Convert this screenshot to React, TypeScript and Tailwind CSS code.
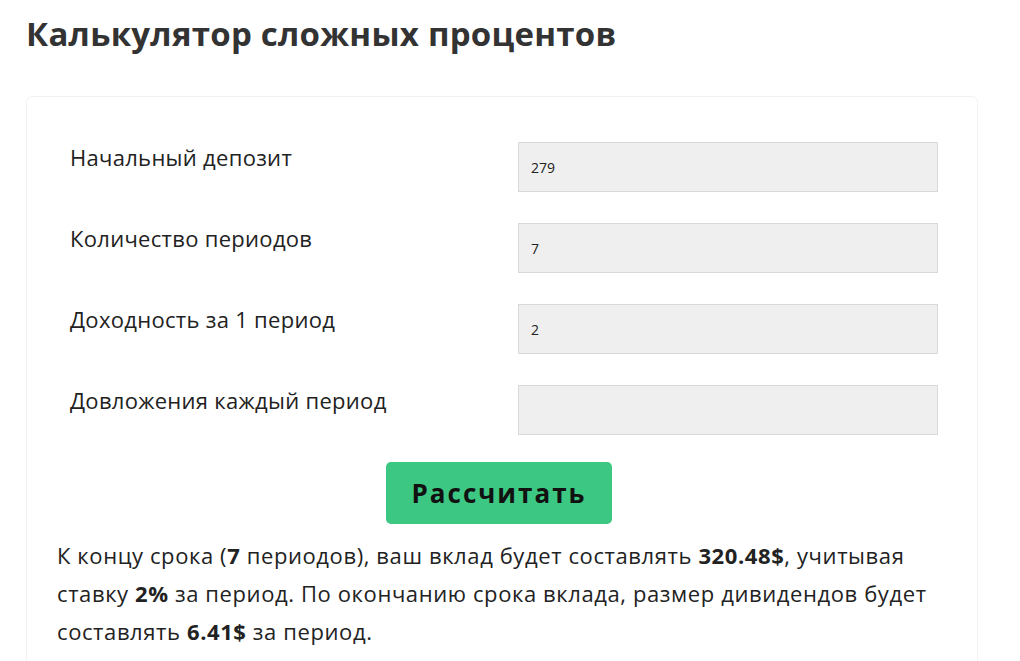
import { useState } from 'react'

const FIELDS = [
  { label: 'Начальный депозит', value: '279' },
  { label: 'Количество периодов', value: '7' },
  { label: 'Доходность за 1 период', value: '2' },
  { label: 'Довложения каждый период', value: '' },
]

export default function App() {
  const [values, setValues] = useState(FIELDS.map(f => f.value))

  return (
    <div className="min-h-screen bg-white px-[26px] pt-[12px] text-[#222]" style={{ fontFamily: '"Open Sans", "Noto Sans", sans-serif' }}>
      <h1 className="text-[33px] font-bold leading-[44px] tracking-[0.25px] text-[#333]">Калькулятор сложных процентов</h1>
      <div className="mt-[40px] w-[952px] rounded-md border border-[#f2f2f2] pt-[45px] pb-6">
        <div className="flex flex-col gap-[31px] pl-[43px] pr-[39px]">
          {FIELDS.map((f, i) => (
            <div key={f.label} className="flex items-start justify-between">
              <label className="pt-[1px] text-[22px] leading-[28px] tracking-[0.3px] text-[#222]">{f.label}</label>
              <input
                value={values[i]}
                onChange={e => setValues(v => v.map((x, j) => (j === i ? e.target.value : x)))}
                className="h-[50px] w-[420px] border border-[#d9d9d9] bg-[#efefef] px-3 text-[14px] text-[#222] outline-none"
              />
            </div>
          ))}
        </div>
        <div className="mt-[27px] flex justify-center pr-[6px]">
          <button className="h-[62px] w-[226px] rounded-[5px] bg-[#3cc782] text-[26px] font-bold tracking-[2px] text-[#111]">
            Рассчитать
          </button>
        </div>
        <p className="mt-[12px] pl-[30px] pr-[30px] text-[22px] leading-[38px] tracking-[0.6px] text-[#222]">
          К концу срока (<b>7</b> периодов), ваш вклад будет составлять <b>320.48$</b>, учитывая ставку <b>2%</b> за период. По окончанию срока вклада, размер дивидендов будет составлять <b>6.41$</b> за период.
        </p>
      </div>
    </div>
  )
}
